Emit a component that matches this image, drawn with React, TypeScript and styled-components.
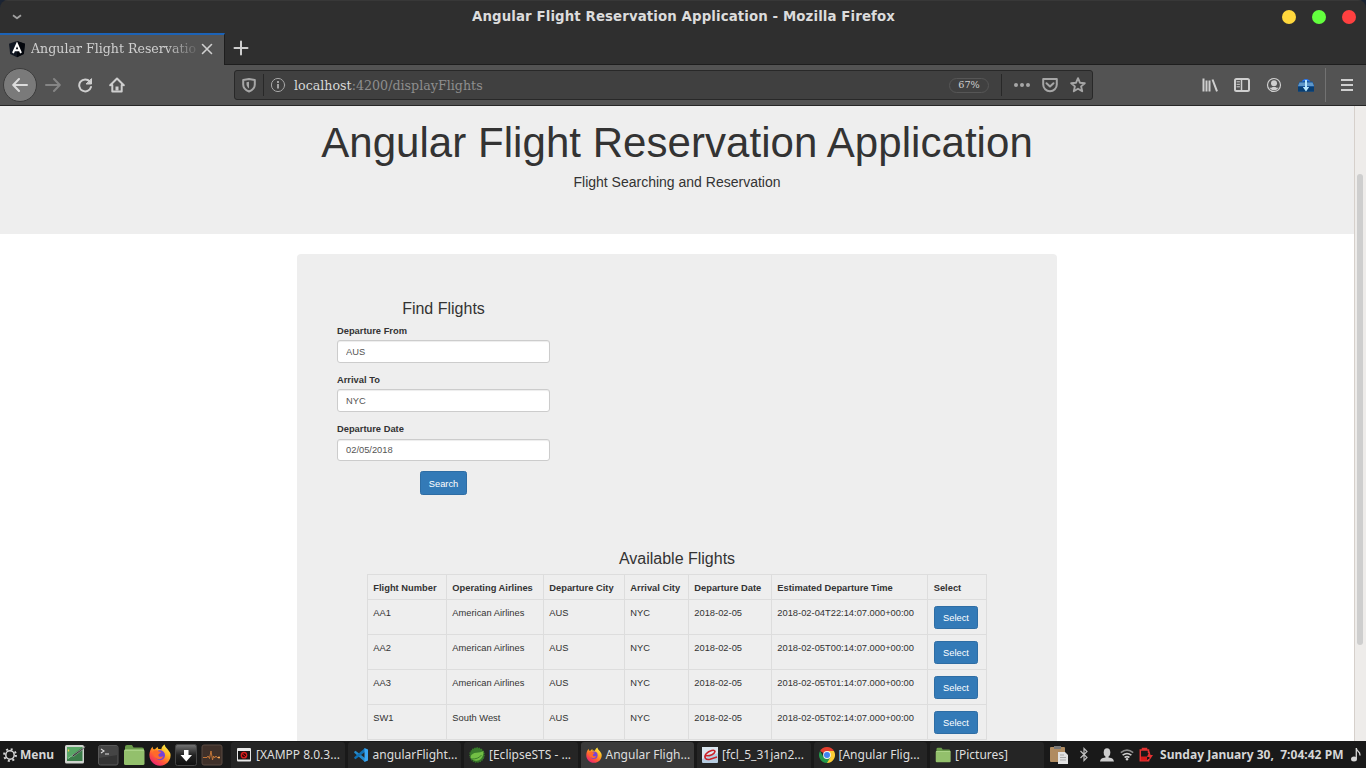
import React from 'react';
import styled, { createGlobalStyle } from 'styled-components';

const GlobalStyle = createGlobalStyle`
  * { box-sizing: border-box; }
  html, body { margin: 0; padding: 0; background: #1b2433; overflow: hidden; }
  svg { display: block; flex: none; }
`;

const Desktop = styled.div`
  width: 1366px;
  height: 768px;
  display: flex;
  flex-direction: column;
  overflow: hidden;
`;

const BrowserWindow = styled.div`
  height: 741px;
  display: flex;
  flex-direction: column;
  border-radius: 8px 8px 0 0;
  overflow: hidden;
  background: #2f2f2f;
`;

const TitleBar = styled.header`
  height: 33px;
  flex: none;
  display: grid;
  grid-template-columns: 120px 1fr 120px;
  align-items: center;
  border-top: 1px solid #383838;
  padding: 0 11px 0 12px;
`;

const WindowTitle = styled.div`
  font: bold 13.33px/20px 'DejaVu Sans', sans-serif;
  letter-spacing: 0.11px;
  color: #dcdcdc;
  text-align: center;
  white-space: nowrap;
`;

const WindowButtons = styled.div`
  display: flex;
  justify-content: flex-end;
  gap: 16px;
  margin-right: -1px;
`;

const Dot = styled.span<{ $color: string }>`
  width: 14px;
  height: 14px;
  border-radius: 50%;
  background: ${(p) => p.$color};
`;

const TabStrip = styled.div`
  height: 32px;
  flex: none;
  display: flex;
  border-bottom: 1px solid #1e1e1e;
`;

const Tab = styled.div`
  width: 225px;
  height: 32px;
  display: flex;
  align-items: center;
  padding: 0 10px 2px 8px;
  background: #535353;
  border-top: 2px solid #1c63b7;
  border-right: 1px solid #1e1e1e;
`;

const TabLabel = styled.span`
  width: 165px;
  margin-left: 5px;
  white-space: nowrap;
  font: 12.6px/20px 'DejaVu Serif', serif;
  color: #d0d0d0;
  mask-image: linear-gradient(to right, #000 135px, transparent 170px);
`;

const TabClose = styled.span`
  margin-left: 5px;
`;

const NewTab = styled.div`
  width: 32px;
  padding-left: 8px;
  padding-top: 7px;
`;

const NavBar = styled.nav`
  height: 41px;
  flex: none;
  display: flex;
  align-items: center;
  background: #535353;
  border-bottom: 1px solid #262626;
  padding: 0 11px 0 3px;
`;

const BackButton = styled.div`
  width: 34px;
  height: 34px;
  border-radius: 50%;
  border: 1px solid #3c3c3c;
  background: #7a7a7a;
  display: flex;
  align-items: center;
  justify-content: center;
`;

const NavIcons = styled.div`
  display: flex;
  gap: 16px;
  margin-left: 8px;
`;

const UrlBar = styled.div`
  width: 859px;
  height: 30px;
  margin-left: 109px;
  display: flex;
  align-items: center;
  background: #404040;
  border: 1px solid #282828;
  border-radius: 3px;
  padding: 0 6px 0 6px;
`;

const UrlDivider = styled.span`
  width: 1px;
  height: 22px;
  background: #282828;
`;

const UrlText = styled.span`
  flex: 1;
  margin-left: 8px;
  padding-top: 1px;
  font: 12.67px/20px 'DejaVu Serif', serif;
  color: #8e8e8e;
  white-space: nowrap;
  b { font-weight: normal; color: #d8d8d8; }
`;

const ZoomBadge = styled.span`
  width: 40px;
  height: 15px;
  border: 1px solid #565656;
  border-radius: 8px;
  margin-right: 12px;
  text-align: center;
  font: 9.7px/12px 'DejaVu Serif', serif;
  color: #d0d0d0;
`;

const UrlActions = styled.div`
  display: flex;
  gap: 12px;
  margin-left: 12px;
`;

const ToolIcons = styled.div`
  display: flex;
  align-items: center;
  gap: 16px;
  margin-left: auto;
`;

const ToolDivider = styled.span`
  width: 1px;
  height: 34px;
  margin-left: 11px;
  margin-right: 13px;
  background: #727272;
`;

const Viewport = styled.div`
  flex: 1;
  min-height: 0;
  display: flex;
  background: #fff;
`;

const Page = styled.main`
  width: 1354px;
  flex: none;
  overflow: hidden;
  font-family: 'Liberation Sans', Arial, sans-serif;
  font-size: 9.33px;
  line-height: 13.33px;
  color: #333;
`;

const ScrollTrack = styled.div`
  width: 12px;
  border-left: 1px solid #d6d0cb;
  background: #eeecea;
  padding: 68px 3px 0 2px;
`;

const ScrollThumb = styled.div`
  width: 6px;
  height: 471px;
  border-radius: 3px;
  background: #cecece;
`;

const Jumbotron = styled.section`
  height: 128px;
  background: #eee;
  text-align: center;
  padding-top: 14px;
`;

const Heading = styled.h1`
  margin: 0;
  font-size: 42px;
  line-height: 46px;
  font-weight: normal;
  letter-spacing: 0.05px;
`;

const Lead = styled.p`
  margin: 6px 0 0;
  font-size: 14px;
  line-height: 20px;
`;

const Panel = styled.section`
  width: 760px;
  height: 560px;
  margin: 20px auto 0;
  border-radius: 4px;
  background: #eee;
  padding: 46px 40px 0;
`;

const SearchForm = styled.form`
  width: 213px;
  display: flex;
  flex-direction: column;
`;

const SubHeading = styled.h3`
  margin: 0;
  font-size: 16px;
  line-height: 18px;
  font-weight: normal;
  text-align: center;
`;

const Field = styled.label`
  display: block;
  height: 49.3px;
  padding-top: 6.8px;
  font-weight: bold;
`;

const Input = styled.input`
  display: block;
  width: 213px;
  height: 22.67px;
  margin-top: 1.87px;
  padding: 1px 8px 0;
  border: 1px solid #ccc;
  border-radius: 3px;
  background: #fff;
  box-shadow: inset 0 1px 1px rgba(0, 0, 0, 0.075);
  font: 9.33px/13px 'Liberation Sans', Arial, sans-serif;
  color: #555;
`;

const Button = styled.button<{ $w: number; $h: number }>`
  display: block;
  width: ${(p) => p.$w}px;
  height: ${(p) => p.$h}px;
  padding: 2px 0 0;
  border: 1px solid #2e6da4;
  border-radius: 2.5px;
  background: #337ab7;
  color: #fff;
  font: 9.33px/13px 'Liberation Sans', Arial, sans-serif;
  text-align: center;
`;

const SearchButton = styled(Button)`
  padding-top: 3px;
`;

const SearchRow = styled.div`
  display: flex;
  justify-content: center;
  margin-top: 5.1px;
`;

const Results = styled.div`
  margin: 55px 30px 0;
`;

const Table = styled.table`
  width: 620px;
  margin-top: 6px;
  table-layout: fixed;
  border-collapse: separate;
  border-spacing: 0;
  border-top: 1px solid #ddd;
  border-left: 1px solid #ddd;
`;

const HeadCell = styled.th<{ $w: number }>`
  width: ${(p) => p.$w}px;
  height: 25px;
  padding: 3px 0 0 5.3px;
  text-align: left;
  white-space: nowrap;
  border-right: 1px solid #ddd;
  border-bottom: 1px solid #ddd;
  &:last-child { padding-left: 5.7px; }
`;

const Cell = styled.td`
  height: 35px;
  padding: 7px 0 0 5.3px;
  vertical-align: top;
  white-space: nowrap;
  border-right: 1px solid #ddd;
  border-bottom: 1px solid #ddd;
`;

const ActionCell = styled(Cell)`
  padding: 6px 0 0 6px;
`;

const Taskbar = styled.footer`
  height: 27px;
  display: flex;
  align-items: center;
  background: #191919;
  color: #d6d6d6;
  font-family: 'Noto Sans', sans-serif;
  font-size: 12px;
`;

const MenuButton = styled.div`
  width: 64px;
  display: flex;
  align-items: center;
  gap: 3px;
  padding-left: 3px;
  font-weight: bold;
  line-height: 18px;
`;

const Launchers = styled.div`
  width: 167px;
  display: flex;
  gap: 4px;
  svg:first-child { margin-right: 7px; }
`;

const TaskList = styled.div`
  width: 814px;
  flex: none;
  display: flex;
  gap: 3px;
  align-self: stretch;
  padding-top: 1px;
`;

const Task = styled.div<{ $active?: boolean }>`
  width: 113.5px;
  flex: none;
  display: flex;
  align-items: center;
  gap: 4px;
  padding-left: 5px;
  border-radius: 3px 3px 0 0;
  background: ${(p) => (p.$active ? '#3a3a3a' : '#252525')};
  color: #dedede;
  line-height: 18px;
  white-space: nowrap;
`;

const Tray = styled.div`
  display: flex;
  align-items: center;
  padding-left: 4px;
`;

const Clock = styled.span`
  width: 184px;
  flex: none;
  margin-left: 6px;
  margin-right: 7px;
  font-weight: bold;
  line-height: 18px;
  letter-spacing: 0.03px;
  white-space: pre;
`;

const AngularIcon = () => (
  <svg width="18" height="18" viewBox="0 0 18 18">
    <path d="M9 1 17 3.8 15.8 14 9 17.2 2.2 14 1 3.8Z" fill="#111722" />
    <path d="M9 1 17 3.8 15.8 14 9 17.2Z" fill="#03060c" />
    <path d="M5 13 9 3.8 13 13M6.6 10.3h4.8" fill="none" stroke="#fff" strokeWidth="1.9" />
  </svg>
);

const FirefoxIcon = ({ size = 16 }: { size?: number }) => (
  <svg width={size} height={size} viewBox="0 0 22 22">
    <defs>
      <linearGradient id="ff-body" x1="0.85" y1="0.05" x2="0.2" y2="1">
        <stop offset="0" stopColor="#fff14a" />
        <stop offset="0.35" stopColor="#ffad20" />
        <stop offset="0.65" stopColor="#ff5a36" />
        <stop offset="1" stopColor="#e8187d" />
      </linearGradient>
    </defs>
    <path d="M20.2 7.5C19.3 5.4 17.6 4.6 16.6 3c-.6-.9-.8-1.6-.9-2.4-2.2 1.2-3.2 3.3-3.4 4.8-.9-.4-2-.5-2.8-.4-.7-.5-.9-1.5-.6-2.3C7.7 3.4 6.7 4.3 6 5.2c-.8 0-1.3 0-1.7-.3-.5-.4-.6-1.7-.5-2.5C1.5 4.5.6 7.7.4 10.5.1 16.7 4.9 21.7 11 21.7c5.900 0 10.600-4.700 10.600-10.500 0-1.500-.6-2.900-1.400-3.700Z" fill="url(#ff-body)" />
    <circle cx="11" cy="11.3" r="5" fill="#7542d8" />
    <path d="M4 7.5c1.2-1.2 3-1.5 4.5-.9 1 1.300 2.400 1.100 3.600 1.300-.2 1.200-2.500 1.500-2.700 3 0 2 2.700 2.700 5 1-1 3-4 4-6.500 2.800C4.700 13.300 3.500 10 4 7.500Z" fill="#ff6a2a" />
  </svg>
);

const FolderIcon = ({ w, h }: { w: number; h: number }) => (
  <svg width={w} height={h} viewBox="0 0 22 22" preserveAspectRatio="none">
    <path d="M2 3a2 2 0 0 1 2-2h5l1.500 2.500H19a2 2 0 0 1 2 2V8H2Z" fill="#6a9a4a" />
    <rect x="1" y="5.5" width="20.5" height="15.5" rx="1.5" fill="#93c06c" />
    <path d="M1.500 6.200h19.500" stroke="#b4da92" />
  </svg>
);

const EditorIcon = () => (
  <svg width="22" height="22" viewBox="0 0 22 22">
    <rect x="1" y="1" width="19" height="18.5" rx="1.5" fill="#cfd3ce" />
    <rect x="3" y="3" width="15.5" height="14" fill="#3b7d49" />
    <path d="M3 3h15.500L3 15Z" fill="#58a765" />
    <path d="M4.500 5.500v2" stroke="#f2c94c" strokeWidth="1.3" />
    <path d="M4 14.500q5-4 7-3.500" stroke="#8fd49b" fill="none" />
    <path d="m8 11.500 11-7.500 2-1.500-1.500 2.500-10 7.500Z" fill="#333" stroke="#d7d7d7" strokeWidth=".4" />
  </svg>
);

const TerminalIcon = () => (
  <svg width="22" height="22" viewBox="0 0 22 22">
    <rect x="1.5" y="1.5" width="19.5" height="19.5" rx="2" fill="#343434" stroke="#585858" />
    <path d="M2 2h18.500v9L2 14Z" fill="#454545" />
    <path d="m4 5 3 2-3 2M8 10h4" fill="none" stroke="#ddd" strokeWidth="1.1" />
  </svg>
);

const DownloadIcon = () => (
  <svg width="22" height="22" viewBox="0 0 22 22">
    <defs>
      <linearGradient id="dl-sheen" x1="0" y1="0" x2="0" y2="1">
        <stop offset="0" stopColor="#757575" />
        <stop offset="0.5" stopColor="#222" />
        <stop offset="1" stopColor="#101010" />
      </linearGradient>
    </defs>
    <rect x=".5" y=".5" width="21" height="21" rx="2" fill="url(#dl-sheen)" stroke="#444" />
    <path d="M9 6h4.500v5H17l-5.700 6.500L5.500 11H9Z" fill="#fff" />
  </svg>
);

const MonitorIcon = () => (
  <svg width="22" height="22" viewBox="0 0 22 22">
    <rect x="1" y="1" width="20" height="20" rx="2" fill="#3f3029" stroke="#5b4a42" />
    <path d="M2 13.500h4l1-1.500 1.500 2.500L10 7l1.500 9 1-4 1 2 1.500-2 1 1.500h2" fill="none" stroke="#cf7c38" strokeWidth=".9" />
    <circle cx="18" cy="13.5" r="1" fill="#ffb15c" />
  </svg>
);

const XamppIcon = () => (
  <svg width="16" height="16" viewBox="0 0 16 16">
    <rect x="1" y="1" width="14" height="13.5" rx="1" fill="#e8e8e8" />
    <rect x="2" y="4" width="12" height="8.5" fill="#161616" />
    <circle cx="8" cy="8.2" r="2.7" fill="#300" stroke="#d81e1e" strokeWidth="1.3" />
    <path d="m6 6.500 4 3.500" stroke="#d81e1e" />
  </svg>
);

const CodeIcon = () => (
  <svg width="16" height="16" viewBox="0 0 16 16">
    <path d="m1 5 1.500-1.300L12 11v4L1.500 6Z" fill="#2489ca" />
    <path d="m1 11 1.500 1.300L12 5V1L1.500 10Z" fill="#1070b3" />
    <path d="m11.500 1 3.500 1.500v11L11.500 15Z" fill="#3aa6f2" />
  </svg>
);

const SpringIcon = () => (
  <svg width="16" height="16" viewBox="0 0 16 16">
    <circle cx="8" cy="8" r="7" fill="#397b2c" stroke="#397b2c" strokeWidth="1.5" strokeDasharray="1.5 .8" />
    <path d="M14.500 4C11 6.500 3 4 1.500 10c2 5.500 13 6 13-6Z" fill="#72bf45" />
    <path d="M2.500 12c4 .2 8-1 10-4" fill="none" stroke="#2f6f25" strokeWidth=".8" />
  </svg>
);

const ReaderIcon = () => (
  <svg width="16" height="16" viewBox="0 0 16 16">
    <rect width="16" height="16" rx="1" fill="#b6cce0" />
    <path d="M0 0h16v6L0 12Z" fill="#dbe6f0" />
    <path d="M3.500 8.800c5 .3 9-1.800 9.500-4.300.2-2.300-6-1-8.800 2.300-3 3.700-.5 6.500 3.800 5.500l7-2.300" fill="none" stroke="#cb2028" strokeWidth="1.5" />
  </svg>
);

const ChromeIcon = () => (
  <svg width="16" height="16" viewBox="0 0 16 16">
    <path d="M1.070 4A8 8 0 0 1 14.930 4L8 8Z" fill="#e33e2e" />
    <path d="M14.930 4A8 8 0 0 1 8 16L8 8V4Z" fill="#fccc34" />
    <path d="M8 16A8 8 0 0 1 1.070 4L4.500 10 8 8l3.500 2Z" fill="#23994b" />
    <circle cx="8" cy="8" r="3.900" fill="#f4f4f4" />
    <circle cx="8" cy="8" r="3" fill="#4084f0" />
  </svg>
);

type IconProps = { children: React.ReactNode; color?: string; width?: number };
const Glyph = ({ children, color = '#cfcfcf', width = 2 }: IconProps) => (
  <svg width="16" height="16" viewBox="0 0 16 16" fill="none" stroke={color} strokeWidth={width} strokeLinecap="round" strokeLinejoin="round">
    {children}
  </svg>
);

const columns: [string, number][] = [
  ['Flight Number', 79],
  ['Operating Airlines', 97],
  ['Departure City', 81],
  ['Arrival City', 64],
  ['Departure Date', 83],
  ['Estimated Departure Time', 156],
  ['Select', 59],
];

const flights = [
  ['AA1', 'American Airlines', 'AUS', 'NYC', '2018-02-05', '2018-02-04T22:14:07.000+00:00'],
  ['AA2', 'American Airlines', 'AUS', 'NYC', '2018-02-05', '2018-02-05T00:14:07.000+00:00'],
  ['AA3', 'American Airlines', 'AUS', 'NYC', '2018-02-05', '2018-02-05T01:14:07.000+00:00'],
  ['SW1', 'South West', 'AUS', 'NYC', '2018-02-05', '2018-02-05T02:14:07.000+00:00'],
];

const fields = [
  ['Departure From', 'AUS'],
  ['Arrival To', 'NYC'],
  ['Departure Date', '02/05/2018'],
];

const tasks: { icon: React.ReactNode; label: string; active?: boolean }[] = [
  { icon: <XamppIcon />, label: '[XAMPP 8.0.3...' },
  { icon: <CodeIcon />, label: 'angularFlight...' },
  { icon: <SpringIcon />, label: '[EclipseSTS - ...' },
  { icon: <FirefoxIcon />, label: 'Angular Fligh...', active: true },
  { icon: <ReaderIcon />, label: '[fcl_5_31jan2...' },
  { icon: <ChromeIcon />, label: '[Angular Flig...' },
  { icon: <FolderIcon w={16} h={16} />, label: '[Pictures]' },
];

export default function App() {
  return (
    <Desktop>
      <GlobalStyle />
      <BrowserWindow>
        <TitleBar>
          <svg width="10" height="6" viewBox="0 0 10 6" fill="none" stroke="#a0a0a0" strokeWidth="1.8">
            <path d="M1 1.200 5 4.300 9 1.200" strokeLinejoin="round" />
          </svg>
          <WindowTitle>Angular Flight Reservation Application - Mozilla Firefox</WindowTitle>
          <WindowButtons>
            <Dot $color="#ffd83d" />
            <Dot $color="#63ff3e" />
            <Dot $color="#ff4040" />
          </WindowButtons>
        </TitleBar>
        <TabStrip>
          <Tab>
            <AngularIcon />
            <TabLabel>Angular Flight Reservation</TabLabel>
            <TabClose>
              <svg width="12" height="12" viewBox="0 0 12 12" stroke="#cfcfcf" strokeWidth="1.6" strokeLinecap="round">
                <path d="m1.500 1.500 9 9M10.500 1.500l-9 9" />
              </svg>
            </TabClose>
          </Tab>
          <NewTab>
            <Glyph><path d="M8 1.500v13M1.500 8h13" /></Glyph>
          </NewTab>
        </TabStrip>
        <NavBar>
          <BackButton>
            <Glyph color="#dcdcdc"><path d="M15 8H1.500M7 2 1.200 8 7 14" /></Glyph>
          </BackButton>
          <NavIcons>
            <Glyph color="#858585"><path d="M1 8h13.500M9 2l5.800 6L9 14" /></Glyph>
            <Glyph>
              <path d="M12.800 4.500A6 6 0 1 0 14 10" />
              <path d="M14.500 2v5h-5Z" fill="#cfcfcf" strokeWidth="1" />
            </Glyph>
            <Glyph>
              <path d="m1.200 8.300L8 1.500l6.800 6.800M3.300 8v6.500h9.400V8" />
              <path d="M8 9.500v4" strokeWidth="3" strokeLinecap="butt" />
            </Glyph>
          </NavIcons>
          <UrlBar>
            <Glyph color="#a6a6a6">
              <path d="M8 2 2.200 3v4.500c0 3 2 5.500 5.800 7 3.800-1.500 5.800-4 5.800-7V3Z" />
              <path d="M8 4.800v6.700C6.300 10 5.500 8.700 5.500 7V5.200Z" fill="#a6a6a6" stroke="none" />
            </Glyph>
            <UrlDivider style={{ marginLeft: 6, marginRight: 6 }} />
            <Glyph color="#a6a6a6" width={1}>
              <circle cx="8" cy="8" r="6.600" />
              <path d="M8 7v4.500M8 4v2" strokeWidth="1.900" strokeLinecap="butt" />
            </Glyph>
            <UrlText><b>localhost</b>:4200/displayFlights</UrlText>
            <ZoomBadge>67%</ZoomBadge>
            <UrlDivider />
            <UrlActions>
              <Glyph color="#a6a6a6">
                <g fill="#a6a6a6" stroke="none"><circle cx="2" cy="8" r="2" /><circle cx="8" cy="8" r="2" /><circle cx="14" cy="8" r="2" /></g>
              </Glyph>
              <Glyph color="#a6a6a6">
                <path d="M1.200 2h13.600v5.500a6.800 6.800 0 0 1-13.600 0Z" />
                <path d="M4.500 6.200 8 9.500l3.500-3.300" />
              </Glyph>
              <Glyph color="#a6a6a6" width={1.9}>
                <path d="m8 1.200 1.900 4.500 4.900.5-3.700 3.200 1.100 4.800L8 11.700l-4.200 2.500 1.100-4.800L1.200 6.200l4.900-.5Z" />
              </Glyph>
            </UrlActions>
          </UrlBar>
          <ToolIcons>
            <Glyph><path d="M1.500 1.500v13M4.500 3.500v11M7.500 3.500v11M10.500 2.500 15 14.300" strokeLinecap="butt" /></Glyph>
            <Glyph>
              <rect x="1" y="2" width="14" height="12" rx="1.5" />
              <path d="M7.500 2v12" strokeWidth="1.5" />
              <path d="M3 4.800h2.500M3 7.300h2.500M3 9.800h2.500" strokeWidth="1" />
            </Glyph>
            <Glyph width={1.2}>
              <circle cx="8" cy="8" r="6.500" />
              <circle cx="8" cy="6.300" r="3" fill="#cfcfcf" stroke="none" />
              <path d="M3.500 10.500c2 .6 2.500.3 3-.5h3c.5.8 1 1.100 3 .5-2 3.800-7 3.800-9 0Z" fill="#cfcfcf" stroke="none" />
            </Glyph>
            <svg width="16" height="16" viewBox="0 0 16 16">
              <circle cx="8" cy="6.500" r="4.500" fill="#2a78f0" />
              <path d="M1.500 4.500h3L8 3.500l3.500 1h3L16 8v6.500H0V8Z" fill="#15549a" />
              <path d="M1.500 5.500h13L16 9H0Z" fill="#5f97c8" />
              <path d="M0 10h16v4.500H0Z" fill="#073e73" />
              <path d="M7 3h2v7h2.200L8 14.500 4.800 10H7Z" fill="#b9e8ff" />
            </svg>
          </ToolIcons>
          <ToolDivider />
          <Glyph width={2}><path d="M2 3h12M2 8h12M2 13h12" strokeLinecap="butt" /></Glyph>
        </NavBar>
        <Viewport>
          <Page>
            <Jumbotron>
              <Heading>Angular Flight Reservation Application</Heading>
              <Lead>Flight Searching and Reservation</Lead>
            </Jumbotron>
            <Panel>
              <SearchForm onSubmit={(e) => e.preventDefault()}>
                <SubHeading>Find Flights</SubHeading>
                {fields.map(([label, value]) => (
                  <Field key={label}>
                    {label}
                    <Input defaultValue={value} />
                  </Field>
                ))}
                <SearchRow>
                  <SearchButton type="submit" $w={47} $h={24}>Search</SearchButton>
                </SearchRow>
              </SearchForm>
              <Results>
                <SubHeading>Available Flights</SubHeading>
                <Table>
                  <thead>
                    <tr>{columns.map(([name, w]) => <HeadCell key={name} $w={w}>{name}</HeadCell>)}</tr>
                  </thead>
                  <tbody>
                    {flights.map((row) => (
                      <tr key={row[0]}>
                        {row.map((value, i) => <Cell key={i}>{value}</Cell>)}
                        <ActionCell><Button type="button" $w={44} $h={23}>Select</Button></ActionCell>
                      </tr>
                    ))}
                  </tbody>
                </Table>
              </Results>
            </Panel>
          </Page>
          <ScrollTrack><ScrollThumb /></ScrollTrack>
        </Viewport>
      </BrowserWindow>
      <Taskbar>
        <MenuButton>
          <svg width="14" height="14" viewBox="0 0 14 14" fill="none" stroke="#d6d6d6">
            <circle cx="7" cy="7" r="4.200" strokeWidth="1.500" />
            <circle cx="7" cy="7" r="5.900" strokeWidth="2" strokeDasharray="2 2.634" />
          </svg>
          Menu
        </MenuButton>
        <Launchers>
          <EditorIcon />
          <TerminalIcon />
          <FolderIcon w={22} h={22} />
          <FirefoxIcon size={22} />
          <DownloadIcon />
          <MonitorIcon />
        </Launchers>
        <TaskList>
          {tasks.map((t) => <Task key={t.label} $active={t.active}>{t.icon}{t.label}</Task>)}
        </TaskList>
        <Tray>
          <svg width="20" height="20" viewBox="0 0 20 20">
            <rect x="1" y="2" width="15" height="15" rx="1" fill="#b08b60" />
            <rect x="5" y="1" width="7" height="3" fill="#777" />
            <path d="M9 7h7l3 3v9H9Z" fill="#e2e2e2" />
            <path d="M11 10h4M11 12.500h6M11 15h6" stroke="#aaa" />
          </svg>
          <svg width="12" height="16" viewBox="0 0 12 16" fill="none" stroke="#bdbdbd" strokeWidth="1.200" style={{ marginLeft: 9 }}>
            <path d="m2.500 4 6.500 6.500-3 3v-12l3 3L2.500 11" />
          </svg>
          <svg width="14" height="16" viewBox="0 0 14 16" fill="#cdcdcd" style={{ marginLeft: 10 }}>
            <ellipse cx="7" cy="5.500" rx="3.300" ry="4.300" />
            <path d="M5.500 8h3v2.500c4 .5 5 1.500 5.500 4H0c.5-2.500 1.500-3.500 5.500-4Z" />
          </svg>
          <svg width="14" height="16" viewBox="0 0 14 16" fill="none" stroke="#cdcdcd" strokeWidth="1.600" style={{ marginLeft: 6 }}>
            <path d="M.8 5.700q6.200-5 12.400 0" stroke="#8b8b8b" />
            <path d="M2.600 8.200q4.400-3.400 8.800 0M4.600 10.500q2.400-1.700 4.800 0" />
            <circle cx="7" cy="12.200" r="1.200" fill="#cdcdcd" stroke="none" />
          </svg>
          <svg width="15" height="16" viewBox="0 0 15 16" fill="none" stroke="#e43232" strokeWidth="1.500" style={{ marginLeft: 5 }}>
            <path d="M3.500 2.800V1.500h4v1.300M9.500 6V3H1.300v10.700h8.200V12" />
            <path d="M2 9.500h6v4H2Z" fill="#d61a1a" stroke="none" />
            <path d="m10.500 4-2.500 6h2.500l-.5 4 4-6h-2.500Z" fill="#e43232" stroke="none" />
          </svg>
          <Clock>Sunday January 30,  7:04:42 PM</Clock>
          <svg width="10" height="15" viewBox="0 0 10 15">
            <ellipse cx="3" cy="12" rx="3" ry="2.500" fill="#d6d6d6" />
            <path d="M5.300 12V1q0 2 2 3.500t1.500 4" fill="none" stroke="#d6d6d6" strokeWidth="1.300" />
          </svg>
        </Tray>
      </Taskbar>
    </Desktop>
  );
}
